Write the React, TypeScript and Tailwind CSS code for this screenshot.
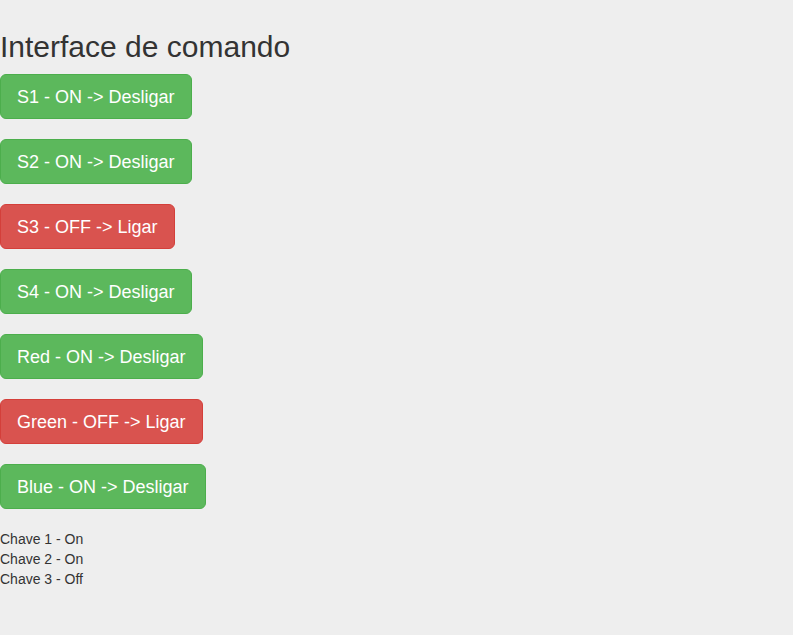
const switches = [
  { label: "S1 - ON -> Desligar", on: true },
  { label: "S2 - ON -> Desligar", on: true },
  { label: "S3 - OFF -> Ligar", on: false },
  { label: "S4 - ON -> Desligar", on: true },
  { label: "Red - ON -> Desligar", on: true },
  { label: "Green - OFF -> Ligar", on: false },
  { label: "Blue - ON -> Desligar", on: true },
];

const keys = ["Chave 1 - On", "Chave 2 - On", "Chave 3 - Off"];

export default function App() {
  return (
    <div className="min-h-screen bg-[#eeeeee] pt-[30px] text-[#333333] font-['Liberation_Sans',Arial,sans-serif]">
      <h2 className="text-[30px] leading-[33px] font-normal mb-[11px]">Interface de comando</h2>
      <div className="flex flex-col items-start gap-[20px]">
        {switches.map((s) => (
          <button
            key={s.label}
            className={`h-[45px] rounded-[6px] border px-[16px] text-[18px] leading-[24px] text-white ${
              s.on ? "bg-[#5cb85c] border-[#4cae4c]" : "bg-[#d9534f] border-[#d43f3a]"
            }`}
          >
            {s.label}
          </button>
        ))}
      </div>
      <div className="mt-[20px] text-[14px] leading-[20px]">
        {keys.map((k) => (
          <div key={k}>{k}</div>
        ))}
      </div>
    </div>
  );
}
